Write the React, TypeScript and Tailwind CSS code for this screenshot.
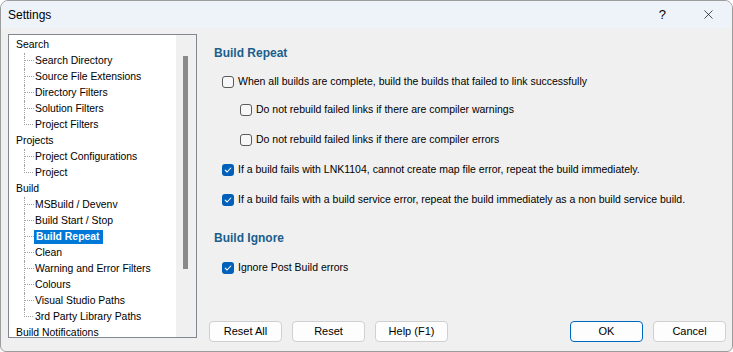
import { X } from "lucide-react";

type TreeGroup = { label: string; children: string[] };

const TREE: TreeGroup[] = [
  {
    label: "Search",
    children: ["Search Directory", "Source File Extensions", "Directory Filters", "Solution Filters", "Project Filters"],
  },
  { label: "Projects", children: ["Project Configurations", "Project"] },
  {
    label: "Build",
    children: [
      "MSBuild / Devenv",
      "Build Start / Stop",
      "Build Repeat",
      "Clean",
      "Warning and Error Filters",
      "Colours",
      "Visual Studio Paths",
      "3rd Party Library Paths",
    ],
  },
  { label: "Build Notifications", children: [] },
];

const SELECTED = "Build Repeat";

function Connector({ last }: { last: boolean }) {
  return (
    <div className="ml-[8px] h-full w-[10px] shrink-0">
      {last ? (
        <div className="h-[8px] w-[9px] border-b border-l border-dotted border-[#a0a0a0]" />
      ) : (
        <div className="h-full border-l border-dotted border-[#a0a0a0]">
          <div className="h-[8px] w-[9px] border-b border-dotted border-[#a0a0a0]" />
        </div>
      )}
    </div>
  );
}

function Tree() {
  return (
    <div className="flex h-[304px] w-[189px] shrink-0 border border-[#828790] bg-white">
      <div className="flex-1 overflow-hidden pl-[7px] pt-[2px] text-[10.4px] leading-[16px] text-black">
        {TREE.map((g) => (
          <div key={g.label}>
            <div className="h-[16px]">{g.label}</div>
            {g.children.map((c, i) => {
              const sel = c === SELECTED;
              return (
                <div key={c} className="flex h-[16px] items-stretch">
                  <Connector last={i === g.children.length - 1} />
                  {sel ? (
                    <span className="my-[1px] bg-[#0078d7] px-[2px] pr-[3px] font-bold leading-[14px] text-white">{c}</span>
                  ) : (
                    <span className="pl-[1px]">{c}</span>
                  )}
                </div>
              );
            })}
          </div>
        ))}
      </div>
      {/* scrollbar */}
      <div className="w-[20px] shrink-0 bg-[#f0f0f0] pl-[7px] pt-[21px]">
        <div className="h-[213px] w-[5px] bg-[#8a8a8a]" />
      </div>
    </div>
  );
}

function Checkbox({ checked }: { checked: boolean }) {
  return checked ? (
    <span className="flex h-[12px] w-[12px] shrink-0 items-center justify-center rounded-[3px] bg-[#005fb8]">
      <svg width="8" height="8" viewBox="0 0 8 8" fill="none">
        <path d="M1.2 4.2 L3.1 6 L6.8 2" stroke="white" strokeWidth="1.1" strokeLinecap="round" strokeLinejoin="round" />
      </svg>
    </span>
  ) : (
    <span className="h-[12px] w-[12px] shrink-0 rounded-[3px] border border-[#5a5a5a] bg-[#f7f7f7]" />
  );
}

function Option({ checked, label, indent, mt }: { checked: boolean; label: string; indent?: boolean; mt: string }) {
  return (
    <div className={`flex h-[16px] items-center gap-[4px] ${indent ? "pl-[26px]" : "pl-[8px]"} ${mt}`}>
      <Checkbox checked={checked} />
      <span>{label}</span>
    </div>
  );
}

function Button({ label, primary }: { label: string; primary?: boolean }) {
  return (
    <button
      className={`h-[21px] w-[73px] rounded-[4px] border bg-[#fdfdfd] text-[11px] leading-none text-black ${
        primary ? "border-[#0067c0]" : "border-[#d0d0d0]"
      }`}
    >
      {label}
    </button>
  );
}

export default function App() {
  return (
    <div
      className="flex h-[352px] w-[733px] flex-col overflow-hidden rounded-t-[8px] rounded-b-[6px] border border-[#9c9c9c] bg-[#f0f0f0]"
      style={{ fontFamily: '"Liberation Sans", Arial, sans-serif' }}
    >
      <div className="flex h-[27px] shrink-0 items-center bg-[#eef3f9] pl-[7px] text-[12px] text-black">
        <span>Settings</span>
        <span className="ml-auto mr-[35px] text-[13px]">?</span>
        <X size={15} strokeWidth={1.1} className="mr-[16px] text-black" />
      </div>
      <div className="flex flex-1 pb-[9px] pl-[7px] pr-[6px] pt-[6px]">
        <Tree />
        <div className="flex flex-1 flex-col pl-[17px] text-[10.5px] text-black">
          <div className="mt-[11px] h-[16px] text-[12px] font-bold leading-[16px] text-[#1b5e8c]">Build Repeat</div>
          <Option mt="mt-[13px]" checked={false} label="When all builds are complete, build the builds that failed to link successfully" />
          <Option mt="mt-[12px]" indent checked={false} label="Do not rebuild failed links if there are compiler warnings" />
          <Option mt="mt-[14px]" indent checked={false} label="Do not rebuild failed links if there are compiler errors" />
          <Option mt="mt-[14px]" checked label="If a build fails with LNK1104, cannot create map file error, repeat the build immediately." />
          <Option mt="mt-[14px]" checked label="If a build fails with a build service error, repeat the build immediately as a non build service build." />
          <div className="mt-[22px] h-[16px] text-[12px] font-bold leading-[16px] text-[#1b5e8c]">Build Ignore</div>
          <Option mt="mt-[14px]" checked label="Ignore Post Build errors" />
          <div className="-ml-[5px] mt-auto flex items-center gap-[10px]">
            <Button label="Reset All" />
            <Button label="Reset" />
            <Button label="Help (F1)" />
            <div className="ml-auto flex gap-[10px]">
              <Button label="OK" primary />
              <Button label="Cancel" />
            </div>
          </div>
        </div>
      </div>
    </div>
  );
}
